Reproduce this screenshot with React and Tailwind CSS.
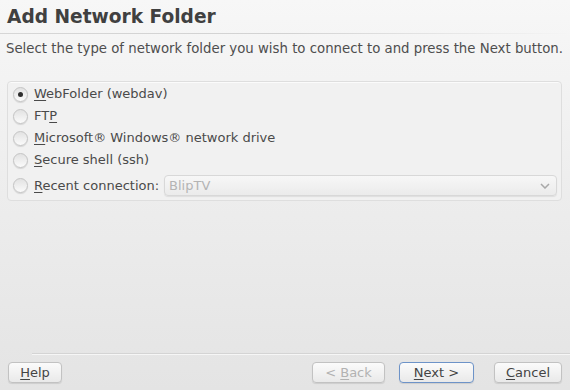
import React from "react";

const font = { fontFamily: '"DejaVu Sans", Verdana, sans-serif' };

function Radio({ checked }) {
  return (
    <span className="relative flex h-[15px] w-[15px] shrink-0 items-center justify-center rounded-full border border-[#c4c4c4] bg-gradient-to-b from-[#e2e2e2] to-[#fbfbfb] shadow-[0_1px_1px_rgba(0,0,0,0.12)]">
      {checked && <span className="h-[5px] w-[5px] rounded-full bg-[#2e2e2e]" />}
    </span>
  );
}

function Mn({ children }) {
  return <span className="underline decoration-1 underline-offset-2">{children}</span>;
}

function Option({ checked, children }) {
  return (
    <div className="flex h-[22px] items-center gap-[6px] pl-[5px]">
      <Radio checked={checked} />
      <span className="text-[13px] text-[#4a4a4a]">{children}</span>
    </div>
  );
}

function Button({ children, disabled, focus, className = "" }) {
  return (
    <button
      className={
        "flex h-[21px] items-center justify-center rounded-[4px] border bg-gradient-to-b from-[#fbfbfb] to-[#e9e9e9] text-[13px] shadow-[0_1px_1px_rgba(0,0,0,0.1)] " +
        (focus ? "border-[#6d93c8] " : "border-[#c2c2c2] ") +
        (disabled ? "text-[#b2b2b2] " : "text-[#444444] ") +
        className
      }
    >
      <span>{children}</span>
    </button>
  );
}

export default function App() {
  return (
    <div
      className="flex h-[390px] w-[570px] flex-col bg-gradient-to-b from-[#f7f7f7] via-[#ededed] to-[#e4e4e4]"
      style={font}
    >
      {/* Header */}
      <div className="px-[7px] pt-[4px]">
        <h1 className="text-[18.6px] font-bold leading-[26px] text-[#404040]">Add Network Folder</h1>
      </div>
      <div className="mt-[3px] h-px bg-gradient-to-r from-[#d6d6d6] via-[#d2d2d2] to-transparent" />
      <p className="mt-[6px] px-[6px] text-[13.3px] leading-[17px] text-[#4e4e4e]">
        Select the type of network folder you wish to connect to and press the Next button.
      </p>

      {/* Options group */}
      <div className="mx-[7px] mt-[24px] mr-[8px] rounded-[4px] border border-[#dedede] bg-[#f1f1f1] pb-[1px] pt-[1px] shadow-[inset_0_1px_0_rgba(255,255,255,0.7)]">
        <Option checked>
          <Mn>W</Mn>ebFolder (webdav)
        </Option>
        <Option>
          FT<Mn>P</Mn>
        </Option>
        <Option>
          <Mn>M</Mn>icrosoft® Windows® network drive
        </Option>
        <Option>
          <Mn>S</Mn>ecure shell (ssh)
        </Option>
        <div className="mt-[1px] flex h-[27px] items-center pl-[5px]">
          <Radio />
          <span className="ml-[6px] text-[13px] text-[#4a4a4a]">
            <Mn>R</Mn>ecent connection:
          </span>
          <div className="ml-[5px] mr-[4px] flex h-[21px] flex-1 items-center justify-between rounded-[4px] border border-[#d8d8d8] bg-gradient-to-b from-[#f7f7f7] to-[#ebebeb] px-[4px] shadow-[0_1px_1px_rgba(0,0,0,0.08)]">
            <span className="text-[13px] text-[#b4b4b4]">BlipTV</span>
            <svg width="10" height="6" viewBox="0 0 10 6" className="mr-[2px]">
              <path d="M1 1l4 4 4-4" fill="none" stroke="#a8a8a8" strokeWidth="1.5" />
            </svg>
          </div>
        </div>
      </div>

      <div className="flex-1" />

      {/* Footer */}
      <div className="ml-[32px] h-px bg-[#d4d4d4] shadow-[0_1px_0_#f6f6f6]" />
      <div className="flex items-center px-[8px] pb-[7px] pt-[8px]">
        <Button className="w-[54px]">
          <Mn>H</Mn>elp
        </Button>
        <div className="flex-1" />
        <Button disabled className="w-[73px]">
          &lt; <Mn>B</Mn>ack
        </Button>
        <Button focus className="ml-[14px] w-[75px]">
          <Mn>N</Mn>ext &gt;
        </Button>
        <Button className="ml-[20px] w-[68px]">
          <Mn>C</Mn>ancel
        </Button>
      </div>
    </div>
  );
}
